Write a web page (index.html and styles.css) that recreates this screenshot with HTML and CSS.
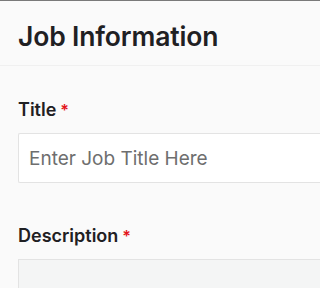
FILE: index.html
```html
<!DOCTYPE html>
<html>
<head>
<meta charset="utf-8">
<link rel="stylesheet" href="styles.css">
</head>
<body>
<div class="page">
  <header class="header">
    <h1 class="title">Job Information</h1>
  </header>
  <section class="form">
    <div class="field">
      <label class="label">Title<span class="req">*</span></label>
      <div class="input"><span class="placeholder">Enter Job Title Here</span></div>
    </div>
    <div class="field">
      <label class="label">Description<span class="req">*</span></label>
      <div class="textarea"></div>
    </div>
  </section>
</div>
</body>
</html>
```
FILE: styles.css
```css
html, body {
  margin: 0;
  padding: 0;
  height: 288px;
  overflow: hidden;
  background: #fafafa;
  font-family: Inter, "Liberation Sans", sans-serif;
  color: #1f2023;
}
.page {
  border-top: 1px solid #7a7a7a;
}
.header {
  padding: 19px 0 0 18px;
  height: 45px;
  border-bottom: 1px solid #f0f0f0;
}
.title {
  margin: 0;
  font-size: 26.5px;
  font-weight: 600;
  line-height: 32px;
  letter-spacing: -0.15px;
}
.form {
  padding: 33px 0 0 18px;
  display: flex;
  flex-direction: column;
  gap: 42px;
}
.field {
  display: flex;
  flex-direction: column;
  gap: 12px;
}
.label {
  font-size: 18px;
  font-weight: 600;
  line-height: 22px;
  display: flex;
  gap: 4px;
}
.req {
  color: #e3151b;
  font-size: 16px;
}
.input {
  height: 48px;
  border: 1px solid #e3e3e3;
  border-right: none;
  background: #fff;
  display: flex;
  align-items: center;
  padding-left: 10px;
  border-radius: 2px 0 0 2px;
}
.placeholder {
  font-size: 19px;
  color: #6e6e6e;
}
.textarea {
  height: 40px;
  border: 1px solid #e3e3e3;
  border-right: none;
  background: #f4f5f5;
}
```
